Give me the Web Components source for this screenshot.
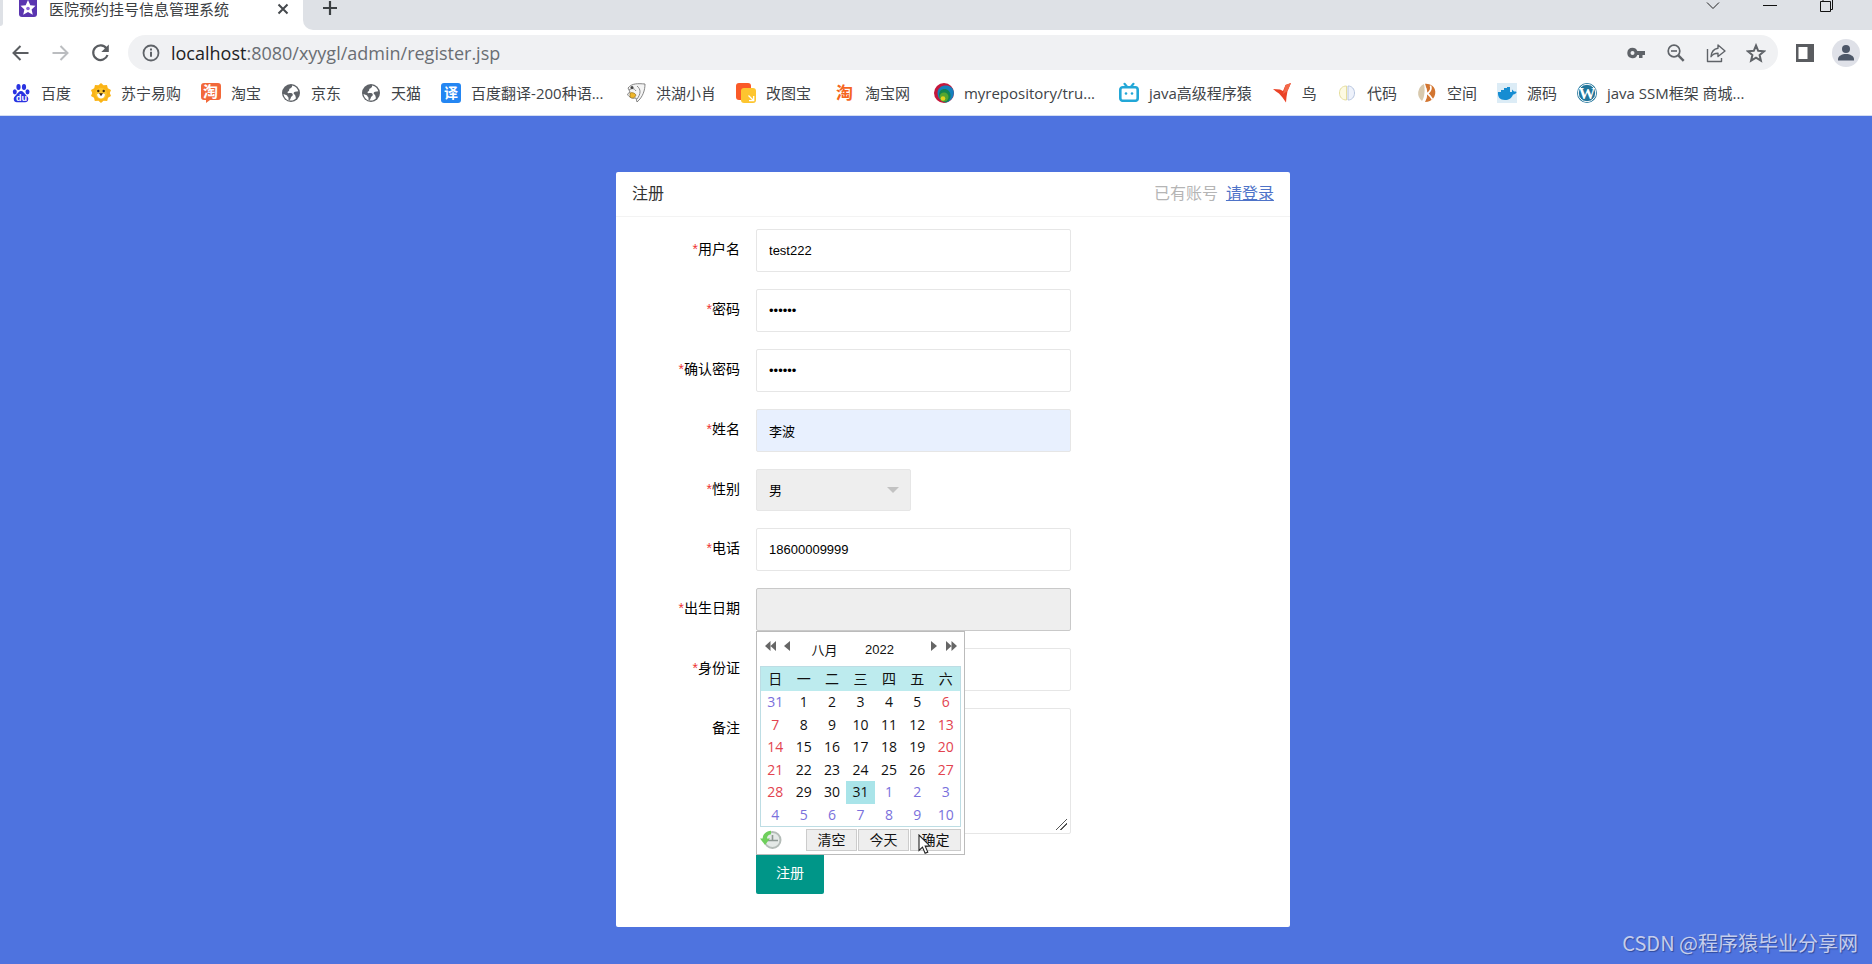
<!DOCTYPE html>
<html lang="zh-CN">
  <head>
    <meta charset="UTF-8" />
    <meta name="viewport" content="width=device-width, initial-scale=1.0" />
    <title>医院预约挂号信息管理系统</title>
    <style>
      html,
      body {
        height: 100%;
        margin: 0;
      }
      body {
        --ui-font: "Open Sans", "Noto Sans CJK SC", sans-serif;
        --form-font: "Liberation Sans", "Noto Sans CJK SC", sans-serif;
        display: flex;
        flex-direction: column;
        overflow: hidden;
        background: #4e73df;
        font-family: var(--ui-font);
      }
    </style>
  </head>

  <body>
    <browser-tabs>医院预约挂号信息管理系统</browser-tabs>
    <address-bar host="localhost" path=":8080/xyygl/admin/register.jsp"></address-bar>
    <bookmark-bar>
      <bookmark-link icon="baidu">百度</bookmark-link>
      <bookmark-link icon="suning">苏宁易购</bookmark-link>
      <bookmark-link icon="taobao">淘宝</bookmark-link>
      <bookmark-link icon="globe">京东</bookmark-link>
      <bookmark-link icon="globe">天猫</bookmark-link>
      <bookmark-link icon="fanyi" long>百度翻译-200种语...</bookmark-link>
      <bookmark-link icon="dolphin">洪湖小肖</bookmark-link>
      <bookmark-link icon="gaitu">改图宝&nbsp;</bookmark-link>
      <bookmark-link icon="tao">淘宝网&nbsp;</bookmark-link>
      <bookmark-link icon="svn" long>myrepository/tru...</bookmark-link>
      <bookmark-link icon="bili">java高级程序猿</bookmark-link>
      <bookmark-link icon="bird">鸟</bookmark-link>
      <bookmark-link icon="code">代码</bookmark-link>
      <bookmark-link icon="space">空间</bookmark-link>
      <bookmark-link icon="docker">源码</bookmark-link>
      <bookmark-link icon="wp" long>java SSM框架 商城...</bookmark-link>
    </bookmark-bar>

    <register-page>
      <register-card heading="注册">
        <span slot="extra">已有账号</span>
        <form-field label="用户名" required value="test222"></form-field>
        <form-field label="密码" required type="password" value="123456"></form-field>
        <form-field label="确认密码" required type="password" value="123456"></form-field>
        <form-field label="姓名" required value="李波" filled></form-field>
        <form-field label="性别" required type="select" value="男,女"></form-field>
        <form-field label="电话" required value="18600009999"></form-field>
        <form-field label="出生日期" required type="date">
          <date-picker slot="popup"></date-picker>
        </form-field>
        <form-field label="身份证" required></form-field>
        <form-field label="备注" type="textarea"></form-field>
      </register-card>
      <water-mark>CSDN @程序猿毕业分享网</water-mark>
    </register-page>
  </body>

  <template id="browser-tabs">
    <style>
      :host {
        display: flex;
        flex: none;
        height: 30px;
        background: #fff;
      }
      .edge {
        width: 3px;
        height: 26px;
        background: #dee1e6;
        border-bottom-right-radius: 3px;
      }
      .tab {
        display: flex;
        align-items: center;
        gap: 12px;
        box-sizing: border-box;
        width: 300px;
        height: 18px;
        padding: 0 14px 0 16px;
        color: #3c4043;
        font-size: 15px;
        line-height: 18px;
      }
      .title {
        flex: 1;
        white-space: nowrap;
      }
      .strip {
        display: flex;
        flex: 1;
        justify-content: space-between;
        background: #dee1e6;
        border-bottom-left-radius: 10px;
      }
      .window {
        display: flex;
        gap: 43px;
        padding-right: 38px;
      }
      button {
        display: block;
        height: 16px;
        padding: 0;
        border: 0;
        background: none;
      }
      .add {
        margin-left: 19px;
      }
      svg {
        display: block;
      }
    </style>
    <div class="edge"></div>
    <div class="tab">
      <svg width="18" height="18" viewBox="0 0 18 18">
        <rect y="-3" width="18" height="20" rx="3" fill="#5a35b0" />
        <path d="M9 0l2.300 5.300 5.200.5-3.900 3.600 1.200 5.400L9 12l-4.800 2.800 1.200-5.400L1.500 5.800l5.200-.5z" fill="#fff" />
        <circle cx="9" cy="8.500" r="1.800" fill="#8a63d8" />
      </svg>
      <span class="title"><slot></slot></span>
      <button aria-label="关闭标签页">
        <svg width="12" height="16" viewBox="0 0 12 16"><path d="M1.500 3.500l9 9m0-9l-9 9" stroke="#45494d" stroke-width="2" /></svg>
      </button>
    </div>
    <div class="strip">
      <button class="add" aria-label="新标签页">
        <svg width="16" height="16" viewBox="0 0 16 16"><path d="M8 1v14M1 8h14" stroke="#3c4043" stroke-width="2.200" /></svg>
      </button>
      <div class="window">
        <button aria-label="搜索标签页">
          <svg width="14" height="16" viewBox="0 0 14 16"><path d="M1 2.500l6 6 6-6" fill="none" stroke="#222" /></svg>
        </button>
        <button aria-label="最小化">
          <svg width="14" height="16" viewBox="0 0 14 16"><path d="M0 5.500h14" stroke="#111" /></svg>
        </button>
        <button aria-label="还原">
          <svg width="14" height="16" viewBox="0 0 14 16"><path d="M.5 1.500h10v10H.5zM3 1v-2h9.500v10.500H11" fill="none" stroke="#111" /></svg>
        </button>
      </div>
    </div>
  </template>

  <template id="address-bar">
    <style>
      :host {
        display: flex;
        flex: none;
        align-items: center;
        gap: 18px;
        padding: 5px 12px 6px 10px;
        background: #fff;
      }
      nav {
        display: flex;
        gap: 20px;
      }
      .omnibox {
        display: flex;
        flex: 1;
        align-items: center;
        gap: 10px;
        height: 35px;
        padding: 0 12px 0 13px;
        border-radius: 18px;
        background: #f0f1f3;
      }
      .url {
        flex: 1;
        color: #6a6e73;
        font-size: 18px;
        line-height: 34px;
        white-space: nowrap;
      }
      .url b {
        color: #202124;
        font-weight: 400;
      }
      .actions {
        display: flex;
        gap: 20px;
      }
      button {
        display: block;
        padding: 0;
        border: 0;
        background: none;
      }
      svg {
        display: block;
      }
    </style>
    <nav>
      <button aria-label="后退">
        <svg width="20" height="20" viewBox="0 0 20 20"><path d="M18.500 10H3.500M10.500 3l-7 7 7 7" fill="none" stroke="#5a5d61" stroke-width="2" /></svg>
      </button>
      <button aria-label="前进" disabled>
        <svg width="20" height="20" viewBox="0 0 20 20"><path d="M2.500 10h15M10.500 3l7 7-7 7" fill="none" stroke="#bbbdc0" stroke-width="2" /></svg>
      </button>
      <button aria-label="重新加载">
        <svg width="20" height="20" viewBox="0 0 20 20">
          <path d="M16.500 5.500A7.300 7.300 0 1 0 17.500 12" fill="none" stroke="#5a5d61" stroke-width="2.200" />
          <path d="M18.800 1.500v7.500h-7.500z" fill="#5a5d61" />
        </svg>
      </button>
    </nav>
    <div class="omnibox">
      <svg width="20" height="20" viewBox="0 0 20 20">
        <circle cx="10" cy="10" r="7.500" fill="none" stroke="#5f6368" stroke-width="1.800" />
        <path d="M10 8.800v5M10 5.500v2" stroke="#5f6368" stroke-width="2" />
      </svg>
      <span class="url"><b></b><span class="path"></span></span>
      <div class="actions">
        <button aria-label="管理密码">
          <svg width="20" height="20" viewBox="0 0 20 20"><path d="M6.500 4.800a5.200 5.200 0 1 0 4.800 7.200H13v3h3.500v-3H19V8h-7.700a5.200 5.200 0 0 0-4.800-3.200zm0 3.200a2 2 0 1 1 0 4 2 2 0 0 1 0-4z" fill="#5f6368" fill-rule="evenodd" /></svg>
        </button>
        <button aria-label="缩放">
          <svg width="20" height="20" viewBox="0 0 20 20">
            <circle cx="8" cy="8" r="5.800" fill="none" stroke="#5f6368" stroke-width="1.700" />
            <path d="M12.300 12.300l5.400 5.600" stroke="#5f6368" stroke-width="2.400" />
            <path d="M5 8h6" stroke="#5f6368" stroke-width="1.600" />
          </svg>
        </button>
        <button aria-label="分享">
          <svg width="20" height="20" viewBox="0 0 20 20">
            <path d="M1.500 6v12.500h14V15M12 2l7 6-7 5.500v-3.300c-3.500 0-5.500 1-7 3.500.4-5 3-7.800 7-8.400z" fill="none" stroke="#5f6368" stroke-width="1.400" stroke-linejoin="round" />
          </svg>
        </button>
        <button aria-label="收藏">
          <svg width="20" height="20" viewBox="0 0 20 20"><path d="M10 2.500l2.200 5.300 5.800.5-4.400 3.800 1.300 5.600L10 14.700l-4.900 3 1.300-5.600L2 8.300l5.800-.5z" fill="none" stroke="#5f6368" stroke-width="2" /></svg>
        </button>
      </div>
    </div>
    <button aria-label="侧边栏">
      <svg width="18" height="18" viewBox="0 0 18 18"><path d="M0 0h18v18H0zM2.500 3v12h9V3z" fill="#5a5c60" fill-rule="evenodd" /></svg>
    </button>
    <button aria-label="用户">
      <svg width="28" height="28" viewBox="0 0 28 28">
        <circle cx="14" cy="14" r="14" fill="#dfe1e8" />
        <circle cx="14" cy="10" r="4" fill="#4d5768" />
        <path d="M6 21.500v-1.500c0-3 4-5 8-5s8 2 8 5v1.500z" fill="#4d5768" />
      </svg>
    </button>
  </template>

  <template id="bookmark-bar">
    <style>
      :host {
        display: flex;
        flex: none;
        gap: 20px;
        height: 34px;
        padding: 5px 11px 0;
        border-bottom: 1px solid #d3ddf3;
        background: #fff;
      }
    </style>
    <slot></slot>
  </template>

  <template id="bookmark-link">
    <style>
      :host {
        display: block;
        flex: none;
      }
      :host([long]) {
        min-width: 165px;
      }
      a {
        display: flex;
        align-items: center;
        gap: 10px;
        color: #404347;
        font-size: 15px;
        line-height: 24px;
        text-decoration: none;
        white-space: nowrap;
      }
      svg {
        display: block;
        flex: none;
        overflow: visible;
      }
    </style>
    <a href="#"><svg width="20" height="20" viewBox="0 0 20 20" aria-hidden="true"></svg><slot></slot></a>
  </template>

  <template id="register-page">
    <style>
      :host {
        display: block;
        position: relative;
        flex: 1;
        padding-top: 56px;
        background: #4e73df;
      }
    </style>
    <slot></slot>
  </template>

  <template id="register-card">
    <style>
      :host {
        display: block;
        width: 36%;
        min-width: 520px;
        margin-left: calc(32% + 17px);
        border-radius: 2px;
        background: #fff;
        color: #000;
        font-family: var(--form-font);
      }
      header {
        display: flex;
        align-items: center;
        justify-content: space-between;
        padding: 0 16px;
        border-bottom: 1px solid #f3f3f3;
        color: #333;
        font-size: 16px;
        line-height: 44px;
      }
      h1 {
        margin: 0;
        font-size: inherit;
        font-weight: 400;
      }
      .extra {
        display: flex;
        gap: 8px;
        color: #b5b5b5;
      }
      a {
        color: #4e73c8;
      }
      form {
        display: flex;
        flex-direction: column;
        gap: 17px;
        padding: 12px 0 33px;
      }
      .submit {
        align-self: flex-start;
        height: 43px;
        margin-left: 140px;
        padding: 0 20px;
        border: 0;
        border-radius: 2px;
        background: #009688;
        color: #fff;
        font: 14px/40px var(--form-font);
      }
    </style>
    <header>
      <h1></h1>
      <div class="extra"><slot name="extra"></slot><a href="#">请登录</a></div>
    </header>
    <form>
      <slot></slot>
      <button type="button" class="submit">注册</button>
    </form>
  </template>

  <template id="form-field">
    <style>
      :host {
        display: flex;
      }
      label {
        box-sizing: border-box;
        width: 140px;
        padding-right: 16px;
        font-size: 14px;
        line-height: 40px;
        text-align: right;
      }
      i {
        color: #e33;
        font-style: normal;
      }
      .box {
        position: relative;
        width: 315px;
      }
      .control {
        display: block;
        box-sizing: border-box;
        width: 100%;
        height: 43px;
        margin: 0;
        padding: 0 12px;
        border: 1px solid #e6e6e6;
        border-radius: 2px;
        outline: none;
        background: #fff;
        color: #000;
        font: 13px var(--form-font);
      }
      :host([filled]) .control {
        background: #e8f0fe;
      }
      :host([type="date"]) .control {
        border-color: #c9c9c9;
        background: #eee;
      }
      :host([type="select"]) .box {
        width: 155px;
      }
      :host([type="select"]) .control {
        height: 42px;
        appearance: none;
        background: #eee;
      }
      :host([type="select"]) .box::after {
        content: "";
        position: absolute;
        top: 18px;
        right: 12px;
        border: 6px solid transparent;
        border-top-color: #c2c2c2;
        pointer-events: none;
      }
      :host([type="textarea"]) .control {
        height: 126px;
      }
      textarea::-webkit-resizer {
        background: linear-gradient(135deg, transparent 46%, #555 46% 54%, transparent 54% 68%, #555 68% 76%, transparent 76%) 1px 1px / 11px 11px no-repeat;
      }
      ::slotted([slot="popup"]) {
        position: absolute;
        top: 100%;
        left: 0;
        z-index: 5;
      }
    </style>
    <label for="control"></label>
    <div class="box"><slot name="popup"></slot></div>
  </template>

  <template id="date-picker">
    <style>
      :host {
        display: block;
        box-sizing: border-box;
        width: 209px;
        padding: 0 3px 3px;
        border: 1px solid #bbb;
        background: #fff;
        color: #111;
        font-family: var(--ui-font);
      }
      .head {
        display: flex;
        align-items: flex-start;
        height: 34px;
        padding: 0 4px 0 5px;
      }
      button {
        padding: 0;
        border: 0;
        background: none;
      }
      .head button {
        height: 28px;
      }
      svg {
        display: block;
      }
      .prev,
      .next {
        display: flex;
        gap: 8px;
      }
      .head input {
        width: 55px;
        min-width: 0;
        height: 26px;
        margin-top: 4px;
        padding: 0;
        border: 0;
        outline: none;
        background: none;
        color: inherit;
        font: 13px var(--form-font);
        text-align: center;
      }
      .month {
        margin-left: 6px;
      }
      .next {
        margin-left: auto;
      }
      table {
        box-sizing: border-box;
        width: 100%;
        height: 161px;
        border: 1px solid #bddde4;
        border-collapse: separate;
        border-spacing: 0;
        table-layout: fixed;
        font-size: 14px;
        line-height: 20px;
        text-align: center;
      }
      th {
        height: 24px;
        padding: 0;
        background: #bdebee;
        font-weight: 400;
      }
      td {
        padding: 0;
      }
      .weekend {
        color: #e2434f;
      }
      .other {
        color: #7a70dc;
      }
      .today {
        background: #a9e4e9;
      }
      .foot {
        display: flex;
        gap: 1px;
        align-items: center;
        padding: 2px 0 0;
      }
      .quick {
        margin-right: auto;
      }
      .foot .action {
        width: 51px;
        height: 22px;
        border: 1px solid #ccc;
        background: #eee;
        color: inherit;
        font: 14px/20px var(--form-font);
      }
      .cursor {
        position: absolute;
        top: 202px;
        left: 161px;
      }
    </style>
    <div class="head">
      <div class="prev">
        <button aria-label="上一年"><svg width="11" height="28" viewBox="0 0 11 28"><path d="M5.500 9v10L0 14zM11 9v10l-5.500-5z" fill="#666" /></svg></button>
        <button aria-label="上个月"><svg width="7" height="28" viewBox="0 0 7 28"><path d="M6 9v10L0 14z" fill="#666" /></svg></button>
      </div>
      <input class="month" aria-label="月份" value="八月" />
      <input aria-label="年份" value="2022" />
      <div class="next">
        <button aria-label="下个月"><svg width="7" height="28" viewBox="0 0 7 28"><path d="M0 9v10l6-5z" fill="#666" /></svg></button>
        <button aria-label="下一年"><svg width="11" height="28" viewBox="0 0 11 28"><path d="M0 9v10l5.500-5zM5.500 9v10l5.500-5z" fill="#666" /></svg></button>
      </div>
    </div>
    <table>
      <thead>
        <tr><th>日</th><th>一</th><th>二</th><th>三</th><th>四</th><th>五</th><th>六</th></tr>
      </thead>
      <tbody></tbody>
    </table>
    <div class="foot">
      <button class="quick" aria-label="快速选择">
        <svg width="22" height="20" viewBox="0 0 22 20">
          <circle cx="12.500" cy="10" r="8" fill="#e4e9e7" stroke="#b4bcb8" stroke-width="2" />
          <path d="M12.500 5v5.500H18M8 10.500h5" fill="none" stroke="#8d9893" stroke-width="1.600" />
          <path d="M11 .8C6 1.200 2.800 4.500 2.600 8.500H0L5 15l5-6.500H6.900C7.200 6 8.500 4.500 11 4.200z" fill="#6fcf5c" />
        </svg>
      </button>
      <button class="action">清空</button>
      <button class="action">今天</button>
      <button class="action">确定</button>
    </div>
    <svg class="cursor" width="14" height="21" viewBox="0 0 14 21" aria-hidden="true">
      <path d="M1 1v15.500l3.500-3.400 2.600 6.200 2.700-1.200-2.600-6H12z" fill="#fff" stroke="#222" stroke-width="1.100" />
    </svg>
  </template>

  <template id="water-mark">
    <style>
      :host {
        position: absolute;
        right: 14px;
        bottom: 7px;
        color: #c5cdec;
        font: 20px/28px "Noto Sans CJK SC", sans-serif;
        text-shadow: 1px 1px 1px #2f4a9c;
      }
    </style>
    <slot></slot>
  </template>

  <script>
    const bookmarkIcons = {
      baidu: `<g fill="#2932e1"><ellipse cx="7.500" cy="4" rx="2.100" ry="3"/><ellipse cx="13" cy="4" rx="2.100" ry="3"/><ellipse cx="3.800" cy="8.800" rx="2" ry="2.600"/><ellipse cx="16.500" cy="8.800" rx="2" ry="2.600"/><path d="M10 8c2 0 3 2 4.500 3.500 2 2 3.500 3.500 2.500 6-1 2-3.500 2-7 1.700-3.500.3-6 .3-7-1.700-1-2.500.5-4 2.500-6C7 10 8 8 10 8z"/></g><text x="5" y="17.500" font-family="Liberation Sans" font-size="9" font-weight="700" fill="#fff">du</text>`,
      suning: `<path d="M10 0l2.500 2.300L16 2l.8 3.300L20 7l-1.200 3L20 13l-3 1.800-.8 3.200-3.700-.2L10 20l-2.500-2.200-3.700.2L3 14.800 0 13l1.200-3L0 7l3.200-1.700L4 2l3.500.3z" fill="#fbb416"/><circle cx="10" cy="10.500" r="5.800" fill="#fcc52c"/><circle cx="7.300" cy="8" r="1.200" fill="#402a10"/><circle cx="12.700" cy="8" r="1.200" fill="#402a10"/><path d="M6 11.500c1.500-1.500 2.500-1 4-.3 1.500-.7 2.500-1.200 4 .3-.5 3-2.500 4-4 4s-3.500-1-4-4z" fill="#fff"/><path d="M8 10.300h4l-2 3z" fill="#402a10"/>`,
      taobao: `<path d="M3 0h14q3 0 3 3v11q0 3-3 3H9l-4 3v-3H3q-3 0-3-3V3q0-3 3-3z" fill="#f2693a"/><text x="2" y="14" font-family="Noto Sans CJK SC" font-size="15" font-weight="700" fill="#fff">淘</text>`,
      globe: `<circle cx="10" cy="10" r="9" fill="#5f6368"/><path d="M11 2.500c.5 2-1 2.500-2.500 3.200-.8.800.3 1.800-1 2.500-1.500.4-1 1.800-.2 2 2-.2 4.200-.4 4.500 1.500.2 1.500-1.800 1.300-2 3-.3 1.300-1 2.300-2 2.800A8 8 0 0 1 2.500 11l3.200 1.200c1 .4.7 1.800 1.800 2.300v2.500c3 1.200 5.500.2 7.500-1.800-.5-1.500-.3-2.700-1.500-3.700-1.500-.7-1-2.500.5-2.800l3.300-.5C16.500 5.500 14.500 3 11 2.500z" fill="#fff"/>`,
      fanyi: `<rect width="20" height="20" rx="3" fill="#2486f2"/><text x="3" y="15" font-family="Noto Sans CJK SC" font-size="14" font-weight="700" fill="#fff">译</text>`,
      dolphin: `<path d="M2 5C6 0 12 .5 19 1c0 6-2 13-8 18l-1-4c-5 1-8-2-8.500-4L4 9z" fill="#f4f4f4" stroke="#777" stroke-width=".9"/><path d="M11 3c4 3 4 8 0 13M3 7c3-2 5-2 7 1" fill="none" stroke="#888"/><circle cx="6" cy="4.500" r="1.500" fill="#444"/><path d="M4 10c2-1 5 0 6 2-1 3-4 4-6 2z" fill="#eeb62b" stroke="#8a6516" stroke-width=".6"/>`,
      gaitu: `<rect width="15" height="17" rx="3" fill="#fa5a28"/><rect x="5" y="5" width="15" height="15" rx="3" fill="#fdc52f"/><path d="M12.500 12.500l5 5M17.700 13v4.700H13" fill="none" stroke="#fff" stroke-width="1.300"/>`,
      tao: `<text x="1" y="16" font-family="Noto Sans CJK SC" font-size="17" font-weight="700" fill="#f5661e">淘</text>`,
      svn: `<circle cx="10" cy="10" r="10" fill="#c5173c"/><path d="M3.500 10C3.500 5 7.500 2.500 12 2.500c4 0 7 2.500 7.800 6C20.300 14 17 18 12.500 19.500 7 18.500 3.500 15 3.500 10z" fill="#1580bd"/><path d="M5 12c0-4 2.500-6 5.500-6s6 2.500 6 6.500c0 4-2 6-5 7C8 18.500 5 16 5 12z" fill="#12844f"/><circle cx="10" cy="14" r="4.500" fill="#55a630"/><circle cx="9" cy="15.500" r="2.300" fill="#e3d51d"/>`,
      bili: `<path d="M5.500.8L8 3.800M14.500.8L12 3.800" stroke="#23a7d7" stroke-width="2.200" stroke-linecap="round"/><rect x="1.300" y="4.300" width="17.400" height="13.400" rx="2.500" fill="#fff" stroke="#23a7d7" stroke-width="2.600"/><path d="M4 17.500v1.500M16 17.500v1.500" stroke="#23a7d7" stroke-width="2.500"/><circle cx="7" cy="10.500" r="1.300" fill="#23a7d7"/><circle cx="13" cy="10.500" r="1.300" fill="#23a7d7"/>`,
      bird: `<path d="M1 6l7 .5L11 8l2.500-6L19 0l-3.500 8-1 6-.5 5.500-3.500-5-3.500-4L4 8.500z" fill="#ea4226"/><path d="M13.500 2L19 0l-3.500 8-4.500 3z" fill="#f26849"/>`,
      code: `<path d="M9.500 3C5 3 2.500 6 2.500 10s2.500 7 7 7z" fill="#fdfae2" stroke="#e5de9e"/><path d="M11 3c4 0 6.500 3 6.500 7s-2.500 7-6.500 7z" fill="#eef2fb" stroke="#b7c5df"/>`,
      space: `<path d="M7 1a10 10 0 0 0-2 17c3-4 3-13 2-17z" fill="#d8c9ad"/><path d="M8 .8c10-.8 13 9 8 15-2 2-4 3-8 3.200 3-5 2-13 0-18.200z" fill="#d27530"/><path d="M13.500 2.500c1 3 0 6-3 8 2 1.500 3.500 3.500 5 6M8.500 5c1.500 4 1 8-.5 12" fill="none" stroke="#fff" stroke-width="1.700"/>`,
      docker: `<path d="M0 0h20v20H0z" fill="#dcecf6"/><path d="M1 9h3V7h3V5h3V4h3v5h2V6.500l2 2c1.500-.3 2.500 0 2.500 1-1 1.500-2.500 2-3.500 2-1.500 4-4 5.500-8 5.500-5 0-7.500-3-7-8z" fill="#168dd2"/>`,
      wp: `<circle cx="10" cy="10" r="10" fill="#21759b"/><circle cx="10" cy="10" r="8.700" fill="none" stroke="#fff"/><text x="10" y="16" text-anchor="middle" font-family="Liberation Serif" font-size="17" font-weight="700" fill="#fff">W</text>`,
    };

    class BaseElement extends HTMLElement {
      constructor() {
        super();
        const template = document.getElementById(this.localName);
        const shadowRoot = this.attachShadow({ mode: "open" });
        shadowRoot.appendChild(template.content.cloneNode(true));
      }
    }

    class AddressBar extends BaseElement {
      connectedCallback() {
        this.shadowRoot.querySelector("b").textContent = this.getAttribute("host");
        this.shadowRoot.querySelector(".path").textContent = this.getAttribute("path");
      }
    }

    class BookmarkLink extends BaseElement {
      connectedCallback() {
        this.shadowRoot.querySelector("svg").innerHTML = bookmarkIcons[this.getAttribute("icon")];
      }
    }

    class RegisterCard extends BaseElement {
      connectedCallback() {
        this.shadowRoot.querySelector("h1").textContent = this.getAttribute("heading");
      }
    }

    class FormField extends BaseElement {
      connectedCallback() {
        const type = this.getAttribute("type") || "text";
        const value = this.getAttribute("value") || "";
        const star = this.hasAttribute("required") ? "<i>*</i>" : "";
        this.shadowRoot.querySelector("label").innerHTML = star + this.getAttribute("label");

        let control;
        if (type === "select") {
          control = document.createElement("select");
          value.split(",").forEach((text) => control.add(new Option(text)));
        } else if (type === "textarea") {
          control = document.createElement("textarea");
        } else {
          control = document.createElement("input");
          control.type = type === "password" ? "password" : "text";
          control.readOnly = type === "date";
          control.value = value;
        }
        control.id = "control";
        control.className = "control";
        this.shadowRoot.querySelector(".box").prepend(control);
      }
    }

    class DatePicker extends BaseElement {
      connectedCallback() {
        const body = this.shadowRoot.querySelector("tbody");
        // August 2022 starts on a Monday, so the grid opens on July 31
        const day = new Date(2022, 6, 31);
        for (let week = 0; week < 6; week++) {
          const row = body.insertRow();
          for (let i = 0; i < 7; i++) {
            const cell = row.insertCell();
            cell.textContent = day.getDate();
            if (day.getMonth() !== 7) cell.className = "other";
            else if (i === 0 || i === 6) cell.className = "weekend";
            else if (day.getDate() === 31) cell.className = "today";
            day.setDate(day.getDate() + 1);
          }
        }
      }
    }

    customElements.define("browser-tabs", class extends BaseElement {});
    customElements.define("address-bar", AddressBar);
    customElements.define("bookmark-bar", class extends BaseElement {});
    customElements.define("bookmark-link", BookmarkLink);
    customElements.define("register-page", class extends BaseElement {});
    customElements.define("register-card", RegisterCard);
    customElements.define("form-field", FormField);
    customElements.define("date-picker", DatePicker);
    customElements.define("water-mark", class extends BaseElement {});
  </script>
</html>
